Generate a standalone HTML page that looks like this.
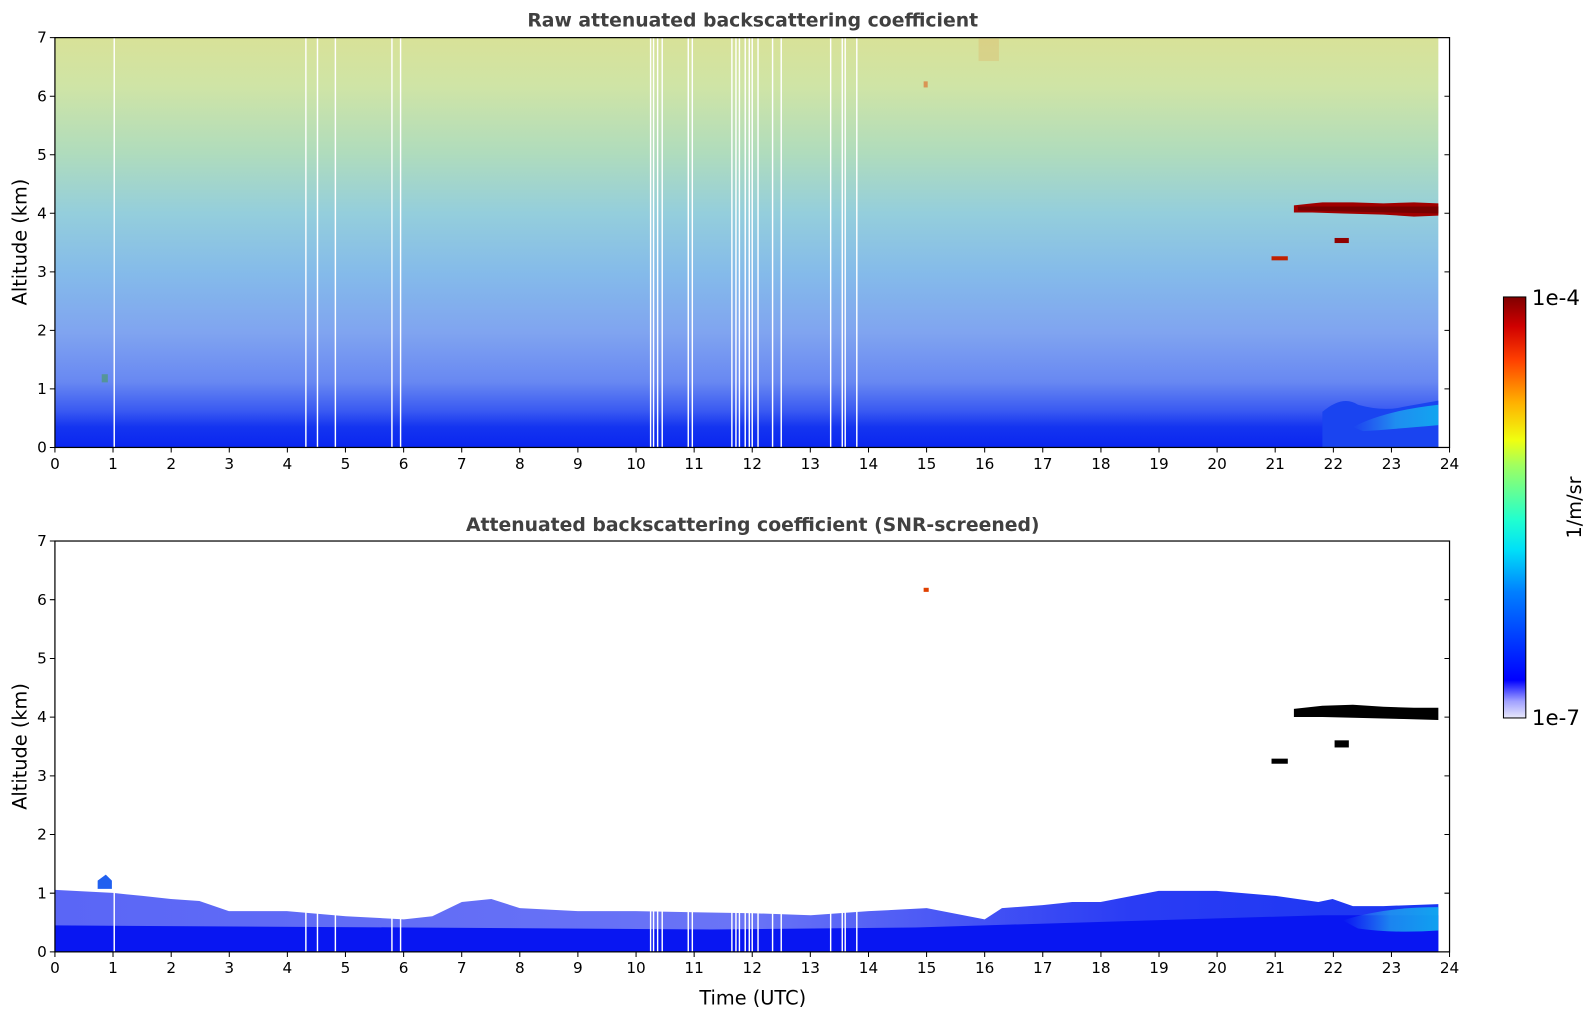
<!DOCTYPE html>
<html><head><meta charset="utf-8"><style>
html,body{margin:0;padding:0;background:#fff;}
svg{display:block;}
text{font-family:"DejaVu Sans","Liberation Sans",sans-serif;}
</style></head><body>
<svg width="1595" height="1020" viewBox="0 0 1568 1003" preserveAspectRatio="none" xmlns="http://www.w3.org/2000/svg">
<defs>
<linearGradient id="g1" x1="0" y1="0" x2="0" y2="1">
<stop offset="0" stop-color="#d8e298"/>
<stop offset="0.12" stop-color="#cfe4a6"/>
<stop offset="0.28" stop-color="#b0dcbc"/>
<stop offset="0.43" stop-color="#94cedc"/>
<stop offset="0.58" stop-color="#84baea"/>
<stop offset="0.72" stop-color="#80a4f0"/>
<stop offset="0.84" stop-color="#6888f2"/>
<stop offset="0.91" stop-color="#3a5af2"/>
<stop offset="0.95" stop-color="#1434f0"/>
<stop offset="1" stop-color="#0a26f0"/>
</linearGradient>
<linearGradient id="gb" x1="0" y1="0" x2="1" y2="0">
<stop offset="0" stop-color="#5a66f6"/>
<stop offset="0.5" stop-color="#6a74f6"/>
<stop offset="0.78" stop-color="#2a3cf4"/>
<stop offset="1" stop-color="#1a36f2"/>
</linearGradient>
<linearGradient id="gc" x1="0" y1="1" x2="0" y2="0">
<stop offset="0" stop-color="#e8e8fa"/>
<stop offset="0.04" stop-color="#a0a0ff"/>
<stop offset="0.09" stop-color="#0000ff"/>
<stop offset="0.3" stop-color="#0080ff"/>
<stop offset="0.4" stop-color="#00e0f8"/>
<stop offset="0.47" stop-color="#20ffd0"/>
<stop offset="0.6" stop-color="#a0ff60"/>
<stop offset="0.66" stop-color="#f0ff10"/>
<stop offset="0.75" stop-color="#ffb000"/>
<stop offset="0.85" stop-color="#ff4000"/>
<stop offset="0.93" stop-color="#d00000"/>
<stop offset="1" stop-color="#800000"/>
</linearGradient>
<linearGradient id="gr" x1="0" y1="0" x2="1" y2="0">
<stop offset="0" stop-color="#3a8cf0" stop-opacity="0"/>
<stop offset="0.5" stop-color="#20a0f0" stop-opacity="0.8"/>
<stop offset="1" stop-color="#10b0f0" stop-opacity="0.9"/>
</linearGradient>
</defs>

<!-- TOP PLOT -->
<text x="740" y="26" text-anchor="middle" font-size="18.5" font-weight="bold" fill="#404040">Raw attenuated backscattering coefficient</text>
<rect x="54" y="37" width="1360" height="403" fill="url(#g1)"/>
<path d="M1300 440 L1300 405 Q1320 388 1335 398 Q1360 405 1380 400 L1414 394 L1414 440Z" fill="#1a44f0"/>
<path d="M1330 420 Q1360 404 1414 398 L1414 418 Q1370 422 1340 424Z" fill="url(#gr)"/>
<g stroke="#fff" stroke-width="1.4">
<path d="M112.3 37V440M300.7 37V440M312.1 37V440M329.7 37V440M385.3 37V440M393.8 37V440M639.6 37V440M642.5 37V440M646.5 37V440M651 37V440M676.6 37V440M680.6 37V440M719.5 37V440M723.5 37V440M726.9 37V440M732.6 37V440M736.6 37V440M739.5 37V440M745.2 37V440M759.5 37V440M768 37V440M816.6 37V440M828 37V440M830.9 37V440M842.3 37V440"/>
</g>
<path d="M1272 202 L1290 200 L1300 199 L1330 199 L1360 200 L1390 199 L1414 200 L1414 212 L1390 213 L1360 211 L1320 210 L1290 209 L1272 209Z" fill="#a00000"/>
<path d="M1276 203 L1414 203 L1414 210 L1276 207Z" fill="#780000"/>
<rect x="1312" y="234" width="14" height="5" fill="#900000"/>
<rect x="1250" y="252" width="16" height="4" fill="#c02000"/>
<rect x="908" y="80" width="4" height="6" fill="#e06020" opacity="0.6"/>
<rect x="962" y="38" width="20" height="22" fill="#e0a050" opacity="0.25"/>
<rect x="100" y="368" width="6" height="8" fill="#40a040" opacity="0.5"/>
<rect x="54" y="37" width="1371" height="403" fill="none" stroke="#000" stroke-width="1.2"/>
<g stroke="#000" stroke-width="1">
<path d="M54 440v5M111.1 440v5M168.3 440v5M225.4 440v5M282.5 440v5M339.6 440v5M396.8 440v5M453.9 440v5M511 440v5M568.1 440v5M625.3 440v5M682.4 440v5M739.5 440v5M796.6 440v5M853.8 440v5M910.9 440v5M968 440v5M1025.1 440v5M1082.3 440v5M1139.4 440v5M1196.5 440v5M1253.6 440v5M1310.8 440v5M1367.9 440v5M1425 440v5"/>
<path d="M49 440h5M49 382.4h5M49 324.9h5M49 267.3h5M49 209.7h5M49 152.2h5M49 94.6h5M49 37h5"/>
<path d="M1420 382.4h5M1420 324.9h5M1420 267.3h5M1420 209.7h5M1420 152.2h5M1420 94.6h5"/>
</g>
<g font-size="15" fill="#000" text-anchor="middle">
<text x="54" y="461">0</text><text x="111.1" y="461">1</text><text x="168.3" y="461">2</text><text x="225.4" y="461">3</text><text x="282.5" y="461">4</text><text x="339.6" y="461">5</text><text x="396.8" y="461">6</text><text x="453.9" y="461">7</text><text x="511" y="461">8</text><text x="568.1" y="461">9</text><text x="625.3" y="461">10</text><text x="682.4" y="461">11</text><text x="739.5" y="461">12</text><text x="796.6" y="461">13</text><text x="853.8" y="461">14</text><text x="910.9" y="461">15</text><text x="968" y="461">16</text><text x="1025.1" y="461">17</text><text x="1082.3" y="461">18</text><text x="1139.4" y="461">19</text><text x="1196.5" y="461">20</text><text x="1253.6" y="461">21</text><text x="1310.8" y="461">22</text><text x="1367.9" y="461">23</text><text x="1425" y="461">24</text>
</g>
<g font-size="15" fill="#000" text-anchor="end">
<text x="46" y="445">0</text><text x="46" y="387.4">1</text><text x="46" y="329.9">2</text><text x="46" y="272.3">3</text><text x="46" y="214.7">4</text><text x="46" y="157.2">5</text><text x="46" y="99.6">6</text><text x="46" y="42">7</text>
</g>
<text transform="translate(26,238) rotate(-90)" font-size="19" text-anchor="middle">Altitude (km)</text>

<!-- BOTTOM PLOT -->
<text x="740" y="522" text-anchor="middle" font-size="18.5" font-weight="bold" fill="#404040">Attenuated backscattering coefficient (SNR-screened)</text>
<path d="M54 875 L111 878 L140 881 L168 884 L196 886 L225 896 L282 896 L340 901 L397 904 L425 901 L454 887 L483 884 L511 893 L568 896 L625 896 L682 897 L740 898 L797 900 L854 896 L911 893 L968 904 L985 893 L1025 890 L1054 887 L1082 887 L1139 876 L1196 876 L1254 881 L1296 887 L1310 884 L1330 891 L1360 891 L1414 889 L1414 936 L54 936Z" fill="url(#gb)"/>
<path d="M54 910 L400 912 L700 914 L900 912 L1100 906 L1300 900 L1414 900 L1414 936 L54 936Z" fill="#0816f2"/>
<path d="M1320 905 Q1360 892 1414 892 L1414 915 Q1370 918 1335 913Z" fill="url(#gr)"/>
<path d="M96 866 L104 860 L110 866 L110 874 L96 874Z" fill="#2060f0"/>
<g stroke="#fff" stroke-width="1.4">
<path d="M112.3 870V936M300.7 890V936M312.1 890V936M329.7 890V936M385.3 895V936M393.8 895V936M639.6 895V936M642.5 895V936M646.5 895V936M651 895V936M676.6 895V936M680.6 895V936M719.5 895V936M723.5 895V936M726.9 895V936M732.6 895V936M736.6 895V936M739.5 895V936M745.2 895V936M759.5 895V936M768 895V936M816.6 895V936M828 895V936M830.9 895V936M842.3 895V936"/>
</g>
<path d="M1272 697 L1300 694 L1330 693 L1360 695 L1390 696 L1414 696 L1414 708 L1380 707 L1340 706 L1300 705 L1272 705Z" fill="#000"/>
<rect x="1312" y="728" width="14" height="7" fill="#000"/>
<rect x="1250" y="746" width="16" height="5" fill="#000"/>
<rect x="908" y="578" width="5" height="4" fill="#e04000"/>
<rect x="54" y="532" width="1371" height="404" fill="none" stroke="#000" stroke-width="1.2"/>
<g stroke="#000" stroke-width="1">
<path d="M54 936v5M111.1 936v5M168.3 936v5M225.4 936v5M282.5 936v5M339.6 936v5M396.8 936v5M453.9 936v5M511 936v5M568.1 936v5M625.3 936v5M682.4 936v5M739.5 936v5M796.6 936v5M853.8 936v5M910.9 936v5M968 936v5M1025.1 936v5M1082.3 936v5M1139.4 936v5M1196.5 936v5M1253.6 936v5M1310.8 936v5M1367.9 936v5M1425 936v5"/>
<path d="M49 936h5M49 878.3h5M49 820.6h5M49 762.9h5M49 705.2h5M49 647.5h5M49 589.7h5M49 532h5"/>
<path d="M1420 878.3h5M1420 820.6h5M1420 762.9h5M1420 705.2h5M1420 647.5h5M1420 589.7h5"/>
</g>
<g font-size="15" fill="#000" text-anchor="middle">
<text x="54" y="957">0</text><text x="111.1" y="957">1</text><text x="168.3" y="957">2</text><text x="225.4" y="957">3</text><text x="282.5" y="957">4</text><text x="339.6" y="957">5</text><text x="396.8" y="957">6</text><text x="453.9" y="957">7</text><text x="511" y="957">8</text><text x="568.1" y="957">9</text><text x="625.3" y="957">10</text><text x="682.4" y="957">11</text><text x="739.5" y="957">12</text><text x="796.6" y="957">13</text><text x="853.8" y="957">14</text><text x="910.9" y="957">15</text><text x="968" y="957">16</text><text x="1025.1" y="957">17</text><text x="1082.3" y="957">18</text><text x="1139.4" y="957">19</text><text x="1196.5" y="957">20</text><text x="1253.6" y="957">21</text><text x="1310.8" y="957">22</text><text x="1367.9" y="957">23</text><text x="1425" y="957">24</text>
</g>
<g font-size="15" fill="#000" text-anchor="end">
<text x="46" y="941">0</text><text x="46" y="883.3">1</text><text x="46" y="825.6">2</text><text x="46" y="767.9">3</text><text x="46" y="710.2">4</text><text x="46" y="652.5">5</text><text x="46" y="594.7">6</text><text x="46" y="537">7</text>
</g>
<text transform="translate(26,734) rotate(-90)" font-size="19" text-anchor="middle">Altitude (km)</text>
<text x="740" y="988" font-size="19" text-anchor="middle">Time (UTC)</text>

<!-- COLORBAR -->
<rect x="1478" y="292" width="22" height="414" fill="url(#gc)" stroke="#000" stroke-width="1"/>
<text x="1506" y="300" font-size="21">1e-4</text>
<text x="1506" y="713" font-size="21">1e-7</text>
<text transform="translate(1554,499) rotate(-90)" font-size="19" text-anchor="middle">1/m/sr</text>
</svg>
</body></html>
